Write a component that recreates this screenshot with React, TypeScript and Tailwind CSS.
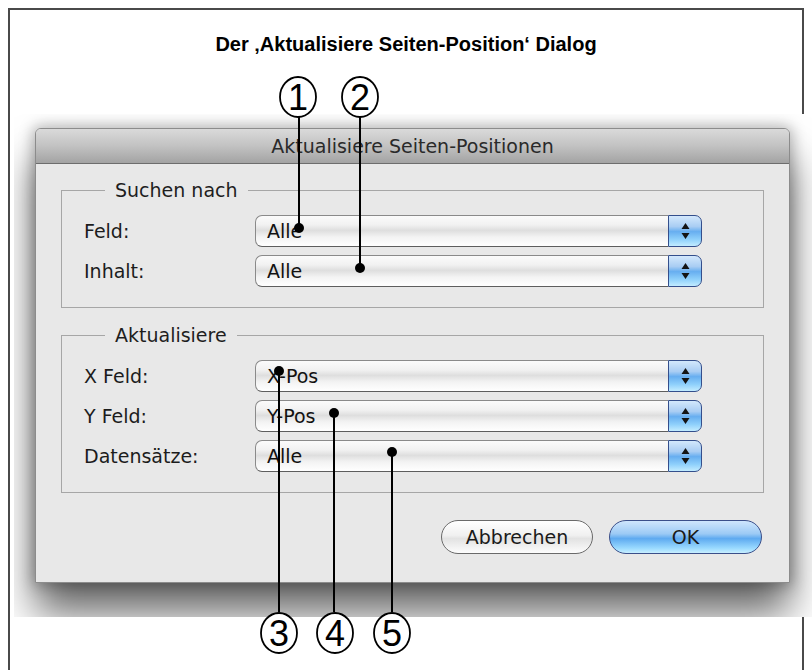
import React from "react";

const popupBg =
  "bg-[linear-gradient(to_bottom,#fbfbfb_0%,#f1f1f1_30%,#dedede_48%,#f3f3f3_70%,#ffffff_100%)]";
const stepperBg =
  "bg-[linear-gradient(to_bottom,#d3e8fc_0%,#a9cdf3_35%,#67aef0_52%,#8fd0fb_78%,#c2ecff_100%)]";

const Stepper = () => (
  <svg width="9" height="18" viewBox="0 0 9 18">
    <path d="M4.5 1 L8.5 7 H0.5 Z M0.5 11 H8.5 L4.5 17 Z" fill="#141414" />
  </svg>
);

const PopUp = ({ value }: { value: string }) => (
  <div className="flex h-[32px] w-[447px]">
    <div
      className={`flex flex-1 items-center rounded-l-[7px] border border-r-0 border-[#8a8a8a] border-b-[#5e5e5e] pl-[11px] text-[19px] text-[#111] ${popupBg}`}
    >
      {value}
    </div>
    <div
      className={`flex w-[34px] items-center justify-center rounded-r-[7px] border border-[#344f8c] ${stepperBg}`}
    >
      <Stepper />
    </div>
  </div>
);

const Row = ({ label, value }: { label: string; value: string }) => (
  <div className="flex items-center">
    <span className="w-[171px] text-[19px] text-[#1c1c1c]">{label}</span>
    <PopUp value={value} />
  </div>
);

const Group = ({
  title,
  className,
  children,
}: {
  title: string;
  className?: string;
  children: React.ReactNode;
}) => (
  <fieldset
    className={`border border-[#a6a6a6] px-[22px] pt-[13px] pb-[20px] ${className ?? ""}`}
  >
    <legend className="ml-[21px] px-[10px] text-[19px] leading-[24px] text-[#1e1e1e]">
      {title}
    </legend>
    <div className="flex flex-col gap-[8px]">{children}</div>
  </fieldset>
);

const Dialog = () => (
  <div className="ml-[21px] mt-[14px] flex h-[455px] w-[755px] flex-col rounded-t-[6px] border border-[#8c8c8c] bg-[#e8e8e8] shadow-[0_30px_40px_rgba(0,0,0,0.6),0_0_14px_3px_rgba(0,0,0,0.25)]">
    <div className="flex h-[35px] items-center justify-center rounded-t-[5px] border-b border-[#6d6d6d] bg-[linear-gradient(to_bottom,#dadada,#c2c2c2_50%,#a3a3a3)] text-[19px] text-[#2a2a2a]">
      Aktualisiere Seiten-Positionen
    </div>
    <div className="px-[25px] pt-[14px]">
      <Group title="Suchen nach">
        <Row label="Feld:" value="Alle" />
        <Row label="Inhalt:" value="Alle" />
      </Group>
      <Group title="Aktualisiere" className="mt-[15px]">
        <Row label="X Feld:" value="X-Pos" />
        <Row label="Y Feld:" value="Y-Pos" />
        <Row label="Datensätze:" value="Alle" />
      </Group>
      <div className="mt-[27px] flex justify-end gap-[16px] pr-[2px]">
        <button className="h-[34px] w-[152px] rounded-full border border-[#6a6a6a] bg-[linear-gradient(to_bottom,#ffffff,#f0f0f0_45%,#e2e2e2_55%,#fdfdfd)] text-[19px] text-[#1a1a1a]">
          Abbrechen
        </button>
        <button className="h-[34px] w-[153px] rounded-full border border-[#3b4f8a] bg-[linear-gradient(to_bottom,#cfe6fd,#9ccaf5_40%,#5eaaf0_55%,#9adaff_85%,#c8efff)] text-[19px] text-[#1a1a1a]">
          OK
        </button>
      </div>
    </div>
  </div>
);

const callouts = [
  { n: "1", cx: 298, cy: 97, lx: 299, y1: 117, y2: 228 },
  { n: "2", cx: 360, cy: 97, lx: 360, y1: 117, y2: 268 },
  { n: "3", cx: 279, cy: 633, lx: 279, y1: 612, y2: 371 },
  { n: "4", cx: 335, cy: 633, lx: 334, y1: 612, y2: 413 },
  { n: "5", cx: 392, cy: 633, lx: 392, y1: 612, y2: 452 },
];

const Callouts = () => (
  <svg
    className="pointer-events-none absolute left-0 top-0 z-20"
    width="812"
    height="670"
    viewBox="0 0 812 670"
  >
    {callouts.map((c) => (
      <g key={c.n}>
        <line x1={c.lx} y1={c.y1} x2={c.lx} y2={c.y2} stroke="#000" strokeWidth="2" />
        <circle cx={c.lx} cy={c.y2} r="5" fill="#000" />
        <ellipse cx={c.cx} cy={c.cy} rx="18" ry="20" fill="#fff" stroke="#000" strokeWidth="1.8" />
        <text
          x={c.cx}
          y={c.cy + 13}
          textAnchor="middle"
          fontSize="36"
          fontFamily="'Liberation Sans', Arial, sans-serif"
          fill="#000"
        >
          {c.n}
        </text>
      </g>
    ))}
  </svg>
);

export default function App() {
  return (
    <div className="relative h-[670px] w-[812px] overflow-hidden bg-white font-['DejaVu_Sans',sans-serif]">
      <div className="ml-[8px] mt-[8px] h-[700px] w-[796px] border-x-2 border-t-2 border-[#4a4a4a]">
        <h1 className="pt-[23px] text-center font-['Liberation_Sans',Arial,sans-serif] text-[20px] font-bold leading-[22px] text-black">
          Der ‚Aktualisiere Seiten-Position‘ Dialog
        </h1>
        <div className="relative z-10 ml-[4px] mt-[59px] h-[503px] w-[798px] overflow-hidden bg-white">
          <Dialog />
        </div>
      </div>
      <Callouts />
    </div>
  );
}
